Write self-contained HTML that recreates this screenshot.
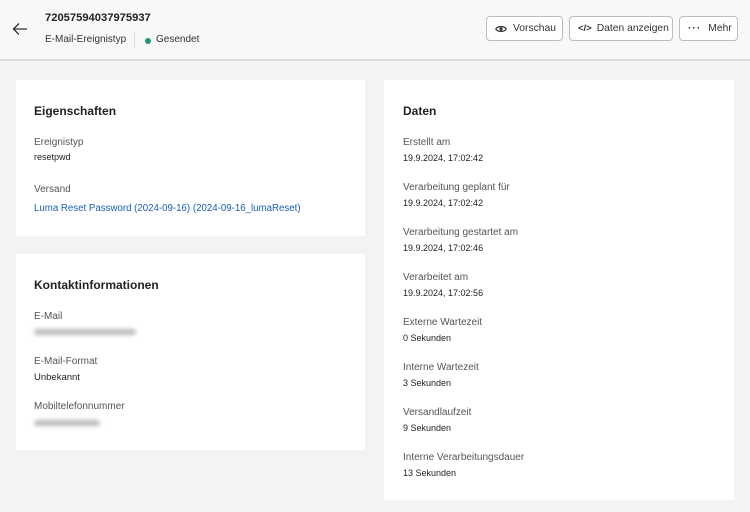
<!DOCTYPE html>
<html><head><meta charset="utf-8"><style>
*{margin:0;padding:0;box-sizing:border-box}
body{width:750px;height:512px;background:#f3f3f3;font-family:"Liberation Sans",sans-serif;color:#222;position:relative;overflow:hidden}
.hdr{position:absolute;left:0;top:0;width:750px;height:61px;background:#f8f8f8;border-bottom:2px solid #dcdcdc}
.abs{position:absolute;white-space:nowrap}
.btn{position:absolute;top:16px;height:25px;border:1px solid #bdbdbd;border-radius:4px;background:#fff;font-size:10.3px;color:#333;display:flex;align-items:center;padding-left:8px;white-space:nowrap}
.card{position:absolute;background:#fff}
.t{position:absolute;font-size:12px;font-weight:bold;color:#222;white-space:nowrap}
.l{position:absolute;font-size:10px;color:#555;white-space:nowrap}
.v{position:absolute;font-size:9px;color:#222;white-space:nowrap}
.blur{position:absolute;height:6px;background:#bbb;filter:blur(2px);border-radius:3px}
</style></head><body>
<div class="hdr"></div>
<svg class="abs" style="left:12px;top:22px" width="16" height="14" viewBox="0 0 16 14"><path d="M15 7H1.5M7 1.5L1.5 7L7 12.5" stroke="#333" stroke-width="1.3" fill="none"/></svg>
<div class="abs" style="left:45px;top:12px;font-size:11.2px;font-weight:bold">72057594037975937</div>
<div class="abs" style="left:45px;top:34px;font-size:10px;color:#333">E-Mail-Ereignistyp</div>
<div class="abs" style="left:134px;top:32px;width:1px;height:16px;background:#ddd"></div>
<div class="abs" style="left:145px;top:38px;width:6px;height:6px;border-radius:50%;background:#1a9b6a"></div>
<div class="abs" style="left:156px;top:34px;font-size:10px;color:#333">Gesendet</div>
<div class="btn" style="left:486px;width:77px"><svg width="12" height="10" viewBox="0 0 12 10"><path d="M0.8 5C2.5 1.8 9.5 1.8 11.2 5C9.5 8.2 2.5 8.2 0.8 5Z" fill="none" stroke="#333" stroke-width="1.3"/><circle cx="6" cy="5" r="1.6" fill="#333"/></svg><span style="margin-left:6px">Vorschau</span></div>
<div class="btn" style="left:569px;width:104px"><span style="font-size:9.5px;font-weight:bold">&lt;/&gt;</span><span style="margin-left:5px">Daten anzeigen</span></div>
<div class="btn" style="left:679px;width:59px"><span style="font-weight:bold;letter-spacing:1px">···</span><span style="margin-left:7px">Mehr</span></div>

<div class="card" style="left:16px;top:80px;width:349px;height:156px">
<div class="t" style="left:18px;top:24px">Eigenschaften</div>
<div class="l" style="left:18px;top:57px">Ereignistyp</div>
<div class="v" style="left:18px;top:72px">resetpwd</div>
<div class="l" style="left:18px;top:104px">Versand</div>
<div class="v" style="left:18px;top:123px;color:#1a5fb4;font-size:9.7px">Luma Reset Password (2024-09-16) (2024-09-16_lumaReset)</div>
</div>
<div class="card" style="left:16px;top:254px;width:349px;height:196px">
<div class="t" style="left:18px;top:24px">Kontaktinformationen</div>
<div class="l" style="left:18px;top:57px">E-Mail</div>
<div class="blur" style="left:18px;top:75px;width:102px"></div>
<div class="l" style="left:18px;top:102px">E-Mail-Format</div>
<div class="v" style="left:18px;top:118px;font-size:9.5px">Unbekannt</div>
<div class="l" style="left:18px;top:147px">Mobiltelefonnummer</div>
<div class="blur" style="left:18px;top:166px;width:66px"></div>
</div>
<div class="card" style="left:384px;top:80px;width:350px;height:420px">
<div class="t" style="left:19px;top:24px">Daten</div>
<div class="l" style="left:19px;top:57px">Erstellt am</div><div class="v" style="left:19px;top:73px">19.9.2024, 17:02:42</div>
<div class="l" style="left:19px;top:102px">Verarbeitung geplant für</div><div class="v" style="left:19px;top:118px">19.9.2024, 17:02:42</div>
<div class="l" style="left:19px;top:147px">Verarbeitung gestartet am</div><div class="v" style="left:19px;top:163px">19.9.2024, 17:02:46</div>
<div class="l" style="left:19px;top:192px">Verarbeitet am</div><div class="v" style="left:19px;top:208px">19.9.2024, 17:02:56</div>
<div class="l" style="left:19px;top:237px">Externe Wartezeit</div><div class="v" style="left:19px;top:253px">0 Sekunden</div>
<div class="l" style="left:19px;top:282px">Interne Wartezeit</div><div class="v" style="left:19px;top:298px">3 Sekunden</div>
<div class="l" style="left:19px;top:327px">Versandlaufzeit</div><div class="v" style="left:19px;top:343px">9 Sekunden</div>
<div class="l" style="left:19px;top:372px">Interne Verarbeitungsdauer</div><div class="v" style="left:19px;top:388px">13 Sekunden</div>
</div>
</body></html>
